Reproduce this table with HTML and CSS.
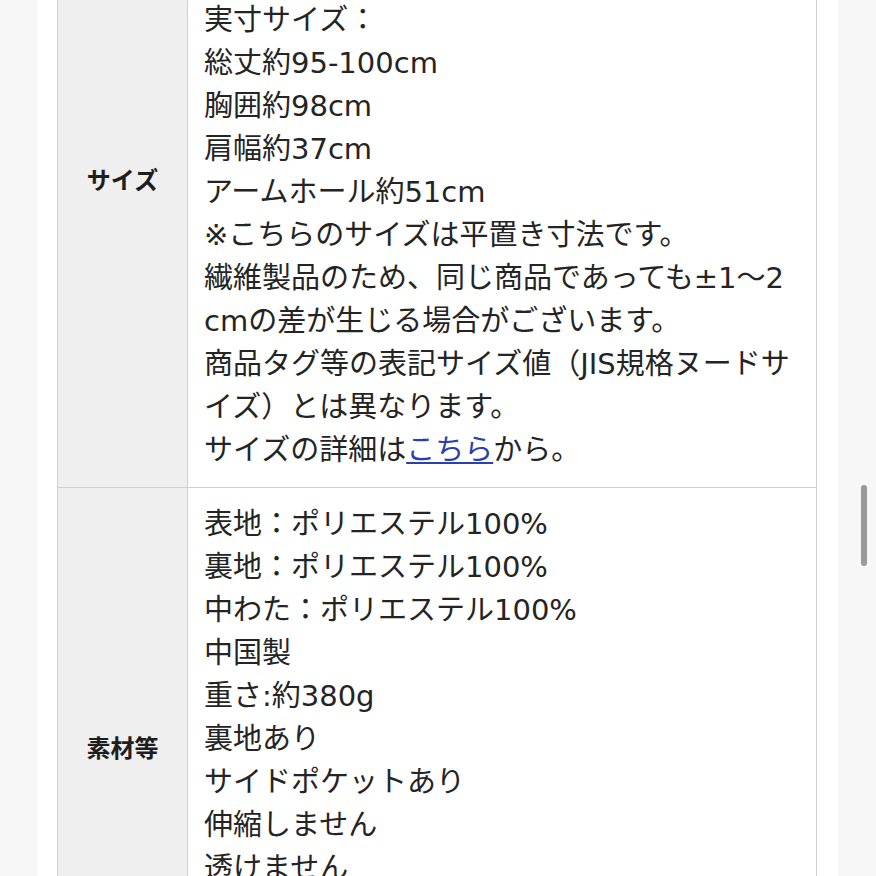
FILE: index.html
```html
<!DOCTYPE html>
<html lang="ja">
<head>
<meta charset="utf-8">
<title>商品詳細</title>
<link rel="stylesheet" href="styles.css">
</head>
<body>
<div class="page">
  <table class="spec">
    <tr>
      <th class="spec-label">サイズ</th>
      <td class="spec-value spec-value--first">実寸サイズ：<br>総丈約95-100cm<br>胸囲約98cm<br>肩幅約37cm<br>アームホール約51cm<br>※こちらのサイズは平置き寸法です。<br>繊維製品のため、同じ商品であっても±1～2cmの差が生じる場合がございます。<br>商品タグ等の表記サイズ値（JIS規格ヌードサイズ）とは異なります。<br>サイズの詳細は<a class="link" href="#">こちら</a>から。</td>
    </tr>
    <tr>
      <th class="spec-label">素材等</th>
      <td class="spec-value spec-value--last">表地：ポリエステル100%<br>裏地：ポリエステル100%<br>中わた：ポリエステル100%<br>中国製<br>重さ:約380g<br>裏地あり<br>サイドポケットあり<br>伸縮しません<br>透けません</td>
    </tr>
  </table>
</div>
<div class="scroll-thumb"></div>
</body>
</html>
```
FILE: styles.css
```css
html, body {
  margin: 0;
  padding: 0;
  height: 100%;
  overflow: hidden;
}
body {
  background: #f7f7f7;
  font-family: "DejaVu Sans", "Noto Sans CJK JP", sans-serif;
  color: #242424;
}
.page {
  background: #ffffff;
  width: 801px;
  margin-left: 37px;
  min-height: 100%;
  padding-left: 20px;
  box-sizing: border-box;
}
.spec {
  border-collapse: collapse;
  width: 760px;
  margin-top: -146px;
}
.spec-label,
.spec-value {
  border: 1px solid #cfcfcf;
}
.spec-label {
  width: 129px;
  padding: 14px 0 0 0;
  background: #efefef;
  font-family: "Noto Sans CJK JP", sans-serif;
  font-size: 24px;
  font-weight: 700;
  color: #1e1e1e;
  text-align: center;
  vertical-align: middle;
}
.spec-value {
  padding: 15px 20px 15px 16px;
  font-size: 29px;
  line-height: 43px;
  text-align: left;
  vertical-align: top;
  word-break: break-all;
}
.spec-value--first {
  padding-top: 144px;
}
.spec-value--last {
  padding-bottom: 101px;
}
.link {
  color: #2c3fae;
  text-decoration: underline;
}
.scroll-thumb {
  position: fixed;
  left: 861px;
  top: 485px;
  width: 6px;
  height: 81px;
  border-radius: 3px;
  background: #9a9a9a;
}
```
